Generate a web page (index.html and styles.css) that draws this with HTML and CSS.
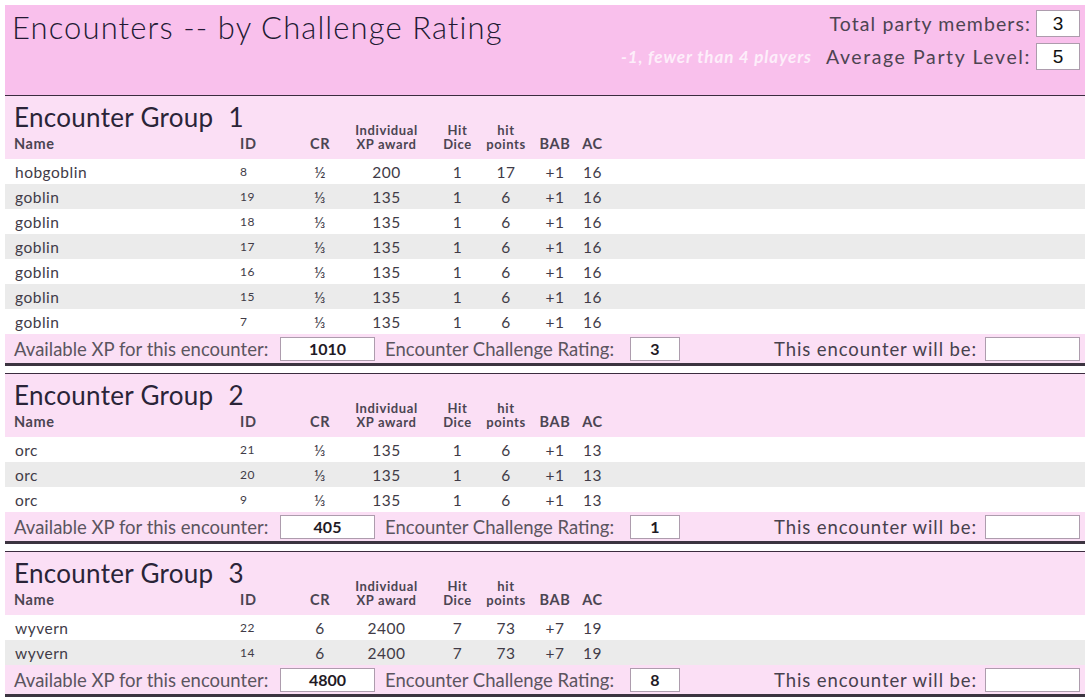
FILE: index.html
```html
<!DOCTYPE html>
<html lang="en">
<head>
    <meta charset="UTF-8">
    <title>Encounters -- by Challenge Rating</title>
    <link rel="stylesheet" href="styles.css">
</head>
<body>

<header class="top">
    <h1>Encounters -- by Challenge Rating</h1>
    <div class="party">
        <div class="party-row">
            <label>Total party members:</label>
            <div class="box party-box">3</div>
        </div>
        <div class="party-row">
            <span class="note">-1, fewer than 4 players</span>
            <label class="level-label">Average Party Level:</label>
            <div class="box party-box">5</div>
        </div>
    </div>
</header>

<!-- Group 1 -->
<section class="group">
    <div class="group-head cols">
        <div class="cell left name-col">
            <div class="title">Encounter Group <span class="num">1</span></div>
            <div class="th">Name</div>
        </div>
        <div class="cell left id th">ID</div>
        <div class="cell th">CR</div>
        <div class="cell th small">Individual<br>XP award</div>
        <div class="cell th small">Hit<br>Dice</div>
        <div class="cell th small">hit<br>points</div>
        <div class="cell th">BAB</div>
        <div class="cell th">AC</div>
    </div>
    <div class="rows">
        <div class="row cols"><div class="cell left name">hobgoblin</div><div class="cell left id">8</div><div class="cell">½</div><div class="cell">200</div><div class="cell">1</div><div class="cell">17</div><div class="cell">+1</div><div class="cell">16</div></div>
        <div class="row cols"><div class="cell left name">goblin</div><div class="cell left id">19</div><div class="cell">⅓</div><div class="cell">135</div><div class="cell">1</div><div class="cell">6</div><div class="cell">+1</div><div class="cell">16</div></div>
        <div class="row cols"><div class="cell left name">goblin</div><div class="cell left id">18</div><div class="cell">⅓</div><div class="cell">135</div><div class="cell">1</div><div class="cell">6</div><div class="cell">+1</div><div class="cell">16</div></div>
        <div class="row cols"><div class="cell left name">goblin</div><div class="cell left id">17</div><div class="cell">⅓</div><div class="cell">135</div><div class="cell">1</div><div class="cell">6</div><div class="cell">+1</div><div class="cell">16</div></div>
        <div class="row cols"><div class="cell left name">goblin</div><div class="cell left id">16</div><div class="cell">⅓</div><div class="cell">135</div><div class="cell">1</div><div class="cell">6</div><div class="cell">+1</div><div class="cell">16</div></div>
        <div class="row cols"><div class="cell left name">goblin</div><div class="cell left id">15</div><div class="cell">⅓</div><div class="cell">135</div><div class="cell">1</div><div class="cell">6</div><div class="cell">+1</div><div class="cell">16</div></div>
        <div class="row cols"><div class="cell left name">goblin</div><div class="cell left id">7</div><div class="cell">⅓</div><div class="cell">135</div><div class="cell">1</div><div class="cell">6</div><div class="cell">+1</div><div class="cell">16</div></div>
    </div>
    <div class="group-foot">
        <label>Available XP for this encounter:</label>
        <div class="box">1010</div>
        <label class="cr-label">Encounter Challenge Rating:</label>
        <div class="box">3</div>
        <label class="result-label">This encounter will be:</label>
        <div class="box"></div>
    </div>
</section>

<!-- Group 2 -->
<section class="group">
    <div class="group-head cols">
        <div class="cell left name-col">
            <div class="title">Encounter Group <span class="num">2</span></div>
            <div class="th">Name</div>
        </div>
        <div class="cell left id th">ID</div>
        <div class="cell th">CR</div>
        <div class="cell th small">Individual<br>XP award</div>
        <div class="cell th small">Hit<br>Dice</div>
        <div class="cell th small">hit<br>points</div>
        <div class="cell th">BAB</div>
        <div class="cell th">AC</div>
    </div>
    <div class="rows">
        <div class="row cols"><div class="cell left name">orc</div><div class="cell left id">21</div><div class="cell">⅓</div><div class="cell">135</div><div class="cell">1</div><div class="cell">6</div><div class="cell">+1</div><div class="cell">13</div></div>
        <div class="row cols"><div class="cell left name">orc</div><div class="cell left id">20</div><div class="cell">⅓</div><div class="cell">135</div><div class="cell">1</div><div class="cell">6</div><div class="cell">+1</div><div class="cell">13</div></div>
        <div class="row cols"><div class="cell left name">orc</div><div class="cell left id">9</div><div class="cell">⅓</div><div class="cell">135</div><div class="cell">1</div><div class="cell">6</div><div class="cell">+1</div><div class="cell">13</div></div>
    </div>
    <div class="group-foot">
        <label>Available XP for this encounter:</label>
        <div class="box">405</div>
        <label class="cr-label">Encounter Challenge Rating:</label>
        <div class="box">1</div>
        <label class="result-label">This encounter will be:</label>
        <div class="box"></div>
    </div>
</section>

<!-- Group 3 -->
<section class="group">
    <div class="group-head cols">
        <div class="cell left name-col">
            <div class="title">Encounter Group <span class="num">3</span></div>
            <div class="th">Name</div>
        </div>
        <div class="cell left id th">ID</div>
        <div class="cell th">CR</div>
        <div class="cell th small">Individual<br>XP award</div>
        <div class="cell th small">Hit<br>Dice</div>
        <div class="cell th small">hit<br>points</div>
        <div class="cell th">BAB</div>
        <div class="cell th">AC</div>
    </div>
    <div class="rows">
        <div class="row cols"><div class="cell left name">wyvern</div><div class="cell left id">22</div><div class="cell">6</div><div class="cell">2400</div><div class="cell">7</div><div class="cell">73</div><div class="cell">+7</div><div class="cell">19</div></div>
        <div class="row cols"><div class="cell left name">wyvern</div><div class="cell left id">14</div><div class="cell">6</div><div class="cell">2400</div><div class="cell">7</div><div class="cell">73</div><div class="cell">+7</div><div class="cell">19</div></div>
    </div>
    <div class="group-foot">
        <label>Available XP for this encounter:</label>
        <div class="box">4800</div>
        <label class="cr-label">Encounter Challenge Rating:</label>
        <div class="box">8</div>
        <label class="result-label">This encounter will be:</label>
        <div class="box"></div>
    </div>
</section>

</body>
</html>
```

FILE: styles.css
```css
body {
    margin: 5px;
    font-family: Lato, "Open Sans", sans-serif;
    color: #3a3440;
    background-color: #fff;
}

/* Top header */
.top {
    background-color: #f9c0ec;
    height: 90px;
    display: flex;
    justify-content: space-between;
    padding: 0 5px 0 7px;
}

.top h1 {
    margin: 3px 0 0;
    font-size: 31px;
    font-weight: 300;
    letter-spacing: 1.1px;
    color: #221a33;
    white-space: nowrap;
}

.party {
    display: flex;
    flex-direction: column;
    align-items: flex-end;
    gap: 6px;
    padding-top: 5px;
}

.party-row {
    display: flex;
    align-items: center;
}

.party-row label {
    font-size: 19.5px;
    letter-spacing: 1.1px;
    color: #4d4452;
    margin-right: 5px;
}

.party-row .level-label {
    letter-spacing: 1.6px;
}

.note {
    color: #fdeefa;
    font-size: 17px;
    font-style: italic;
    font-weight: bold;
    letter-spacing: 0.9px;
    margin-right: 14px;
}

.box {
    background-color: #fff;
    border: 1px solid #ad9cad;
    box-sizing: border-box;
    text-align: center;
}

.party-box {
    width: 44px;
    height: 27px;
    font-family: "Liberation Sans", Arial, sans-serif;
    font-size: 19px;
    line-height: 25px;
    color: #111;
}

/* Groups */
.group {
    border-top: 1px solid #3b2c3f;
}

.group + .group {
    margin-top: 7px;
}

.cols {
    display: grid;
    grid-template-columns: 230px 60px 50px 83px 59px 38px 60px 15px 1fr;
}

.cell {
    display: flex;
    justify-content: center;
    align-items: center;
    white-space: nowrap;
}

.cell.left {
    justify-content: flex-start;
}

.group-head {
    background-color: #fbdff5;
    height: 63px;
    box-sizing: border-box;
    padding-bottom: 8px;
    align-items: end;
}

.group-head .cell {
    align-items: flex-end;
}

.name-col {
    flex-direction: column;
    align-items: flex-start !important;
    padding-left: 9px;
}

.title {
    font-size: 26px;
    line-height: 28px;
    letter-spacing: 0.3px;
    color: #2a2438;
    margin-bottom: 5px;
}

.title .num {
    margin-left: 8px;
}

.th {
    font-size: 14.5px;
    font-weight: bold;
    line-height: 15px;
    letter-spacing: 0.6px;
    color: #4b4552;
}

.th.small {
    font-size: 13px;
    line-height: 14px;
    letter-spacing: 0.6px;
    text-align: center;
}

.row {
    height: 25px;
    font-size: 15.5px;
    letter-spacing: 0.5px;
    color: #413b47;
}

.rows .row:nth-child(even) {
    background-color: #ebebeb;
}

.name {
    padding-left: 10px;
}

.id {
    padding-left: 5px;
}

.row .id {
    font-size: 12px;
}

/* Footer of each group */
.group-foot {
    background-color: #fbdff5;
    height: 29px;
    border-bottom: 3px solid #3c3440;
    display: grid;
    grid-template-columns: 275px 95px 255px 50px 1fr 95px;
    align-items: center;
    padding-right: 5px;
}

.group-foot label {
    font-size: 18.5px;
    color: #5b5560;
    white-space: nowrap;
    padding-left: 9px;
}

.group-foot .cr-label {
    padding-left: 10px;
}

.group-foot .result-label {
    text-align: right;
    padding-right: 8px;
    letter-spacing: 0.9px;
    color: #47414d;
}

.group-foot .box {
    height: 24px;
    font-size: 16px;
    font-weight: bold;
    line-height: 22px;
    color: #1f1a25;
}
```
